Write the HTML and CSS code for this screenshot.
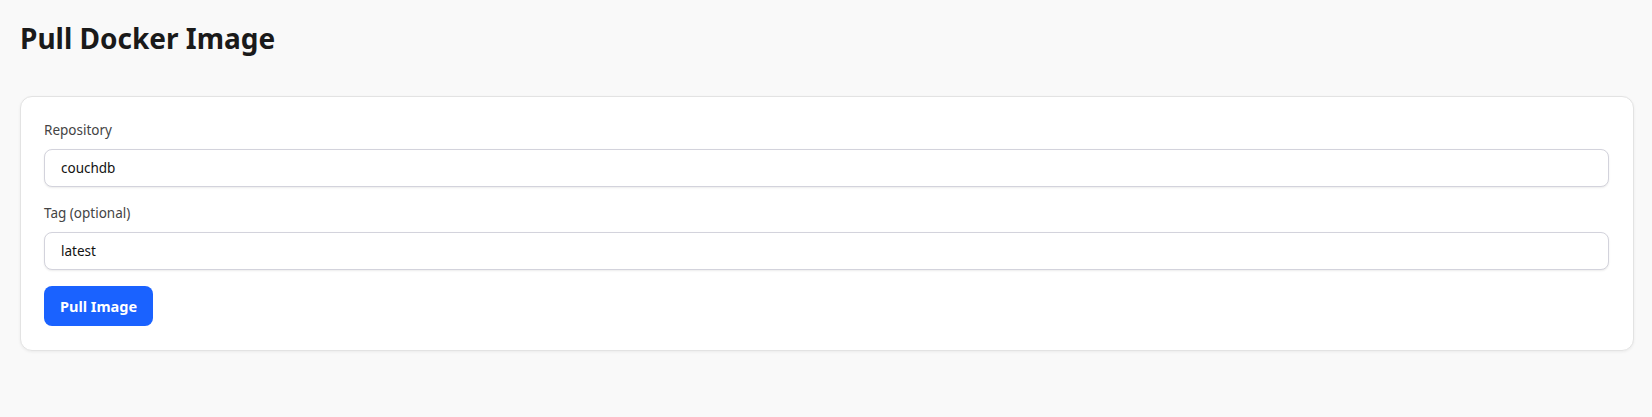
FILE: index.html
```html
<!DOCTYPE html>
<html lang="en">
<head>
<meta charset="utf-8">
<title>Pull Docker Image</title>
<link rel="stylesheet" href="styles.css">
</head>
<body>
<main class="page">
  <h1 class="title">Pull Docker Image</h1>
  <form class="card">
    <div class="field">
      <label class="label" for="repo">Repository</label>
      <input class="input" id="repo" type="text" value="couchdb">
    </div>
    <div class="field">
      <label class="label" for="tag">Tag (optional)</label>
      <input class="input" id="tag" type="text" value="latest">
    </div>
    <div class="actions">
      <button class="btn" type="button">Pull Image</button>
    </div>
  </form>
</main>
</body>
</html>
```

FILE: styles.css
```css
* { box-sizing: border-box; }
html, body { margin: 0; padding: 0; }
body {
  background: #f9f9f9;
  font-family: "Noto Sans", "Open Sans", "Liberation Sans", sans-serif;
  color: #1a1a1a;
}
.page {
  padding: 18px 18px 20px 20px;
}
.title {
  margin: 0 0 38px 0;
  font-size: 28px;
  line-height: 40px;
  font-weight: 700;
  color: #1a1a1a;
}
.card {
  background: #ffffff;
  border: 1px solid #e3e3e3;
  border-radius: 12px;
  box-shadow: 0 1px 3px rgba(0,0,0,0.06);
  padding: 23px 24px 24px 23px;
  display: flex;
  flex-direction: column;
  gap: 16px;
}
.field {
  display: flex;
  flex-direction: column;
  gap: 9px;
}
.label {
  font-size: 13.5px;
  line-height: 20px;
  color: #444;
}
.input {
  height: 38px;
  border: 1px solid #d3d3dc;
  border-radius: 8px;
  padding: 0 16px;
  font-family: inherit;
  font-size: 13.5px;
  color: #111;
  background: #fff;
  box-shadow: 0 1px 2px rgba(0,0,0,0.08);
  outline: none;
}
.actions {
  display: flex;
}
.btn {
  height: 40px;
  padding: 0 16px;
  border: none;
  border-radius: 8px;
  background: #1a62ff;
  color: #fff;
  font-family: inherit;
  font-size: 14.5px;
  font-weight: 700;
  cursor: pointer;
}
```
